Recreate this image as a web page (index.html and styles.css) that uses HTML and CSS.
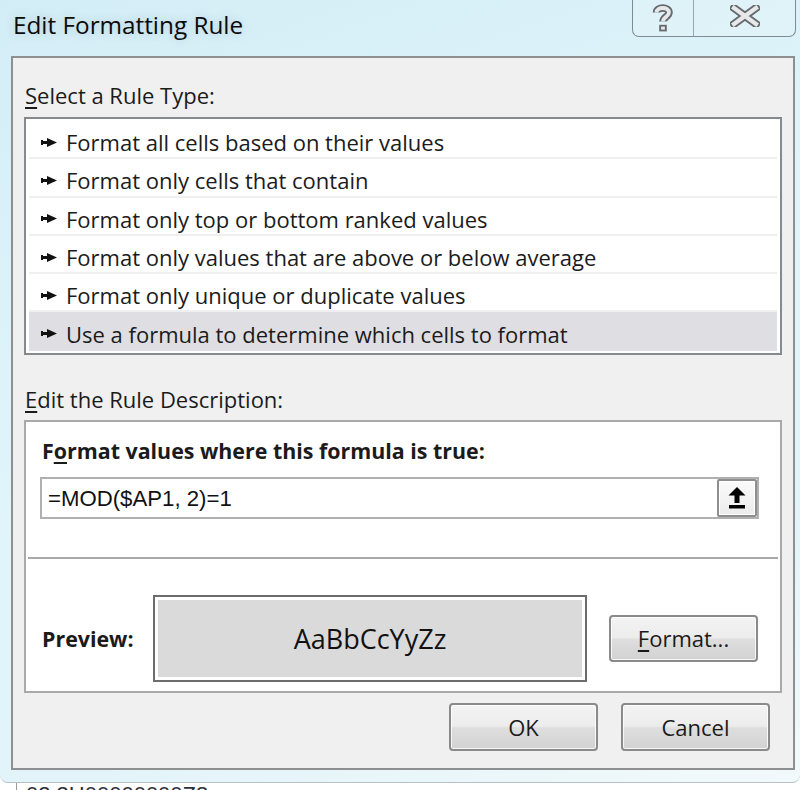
FILE: index.html
```html
<!DOCTYPE html>
<html>
<head>
<meta charset="utf-8">
<link rel="stylesheet" href="styles.css">
</head>
<body>
<div class="window">
  <div class="titlebar">
    <div class="title">Edit Formatting Rule</div>
    <div class="caption">
      <div class="cbtn help">
        <svg width="22" height="28" viewBox="0 0 22 28">
          <path d="M4.5 8.5 C4.5 2.5, 17 2.5, 17 8.5 C17 12.5, 11 13, 11 17.5" fill="none" stroke="#666a6e" stroke-width="7.5" stroke-linejoin="round"/>
          <rect x="7.2" y="20.8" width="7.6" height="6.6" fill="#666a6e"/>
          <path d="M4.5 8.5 C4.5 2.5, 17 2.5, 17 8.5 C17 12.5, 11 13, 11 17.5" fill="none" stroke="#e6e8ea" stroke-width="3.8" stroke-linejoin="round"/>
          <rect x="9.1" y="22.6" width="3.8" height="3" fill="#e6e8ea"/>
        </svg>
      </div>
      <div class="cbtn close">
        <svg width="30" height="22" viewBox="0 0 30 22">
          <path d="M4 3 L26 19 M26 3 L4 19" stroke="#666a6e" stroke-width="8" stroke-linecap="square"/>
          <path d="M4 3 L26 19 M26 3 L4 19" stroke="#e6e8ea" stroke-width="4.2" stroke-linecap="square"/>
        </svg>
      </div>
    </div>
  </div>
  <div class="panel">
    <div class="label first"><u>S</u>elect a Rule Type:</div>
    <div class="listbox">
      <div class="row"><svg class="bullet" width="16" height="9" viewBox="0 0 16 9"><rect x="0" y="3" width="8" height="3" fill="#111"/><rect x="0" y="2" width="2" height="5" fill="#111"/><polygon points="6,0 16,4.5 6,9" fill="#111"/></svg><span>Format all cells based on their values</span></div>
      <div class="row"><svg class="bullet" width="16" height="9" viewBox="0 0 16 9"><rect x="0" y="3" width="8" height="3" fill="#111"/><rect x="0" y="2" width="2" height="5" fill="#111"/><polygon points="6,0 16,4.5 6,9" fill="#111"/></svg><span>Format only cells that contain</span></div>
      <div class="row"><svg class="bullet" width="16" height="9" viewBox="0 0 16 9"><rect x="0" y="3" width="8" height="3" fill="#111"/><rect x="0" y="2" width="2" height="5" fill="#111"/><polygon points="6,0 16,4.5 6,9" fill="#111"/></svg><span>Format only top or bottom ranked values</span></div>
      <div class="row"><svg class="bullet" width="16" height="9" viewBox="0 0 16 9"><rect x="0" y="3" width="8" height="3" fill="#111"/><rect x="0" y="2" width="2" height="5" fill="#111"/><polygon points="6,0 16,4.5 6,9" fill="#111"/></svg><span>Format only values that are above or below average</span></div>
      <div class="row"><svg class="bullet" width="16" height="9" viewBox="0 0 16 9"><rect x="0" y="3" width="8" height="3" fill="#111"/><rect x="0" y="2" width="2" height="5" fill="#111"/><polygon points="6,0 16,4.5 6,9" fill="#111"/></svg><span>Format only unique or duplicate values</span></div>
      <div class="row selected"><svg class="bullet" width="16" height="9" viewBox="0 0 16 9"><rect x="0" y="3" width="8" height="3" fill="#111"/><rect x="0" y="2" width="2" height="5" fill="#111"/><polygon points="6,0 16,4.5 6,9" fill="#111"/></svg><span>Use a formula to determine which cells to format</span></div>
    </div>
    <div class="label second"><u>E</u>dit the Rule Description:</div>
    <div class="desc">
      <div class="heading">F<u>o</u>rmat values where this formula is true:</div>
      <div class="input">
        <span class="val">=MOD($AP1, 2)=1</span>
        <div class="collapse">
          <svg width="18" height="24" viewBox="0 0 18 24">
            <polygon points="0.5,9.5 9,1 17.5,9.5" fill="#000"/>
            <rect x="6.5" y="8" width="5" height="9" fill="#000"/>
            <rect x="1" y="19" width="16" height="3.5" fill="#000"/>
          </svg>
        </div>
      </div>
      <div class="sep"></div>
      <div class="preview-row">
        <div class="plabel">Preview:</div>
        <div class="pbox"><div class="pfill">AaBbCcYyZz</div></div>
        <div class="btn fmt"><span><u>F</u>ormat...</span></div>
      </div>
    </div>
    <div class="actions">
      <div class="btn">OK</div>
      <div class="btn">Cancel</div>
    </div>
  </div>
</div>
<div class="below"><div class="cell">02 3H00000000Z8</div></div>
</body>
</html>
```
FILE: styles.css
```css
html, body {
  margin: 0;
  padding: 0;
}
body {
  width: 800px;
  height: 790px;
  overflow: hidden;
  background: #ffffff;
  font-family: "Open Sans", "Noto Sans", sans-serif;
  color: #1b1b1b;
}
u {
  text-decoration: underline;
  text-decoration-thickness: 1.5px;
  text-underline-offset: 3px;
}
.window {
  height: 783px;
  box-sizing: border-box;
  background: linear-gradient(160deg, #d3edf6 0%, #dff4fa 40%, #e2f4f9 75%, #f2f9fb 100%);
  border-bottom: 1px solid #b7c2c8;
  border-radius: 0 0 8px 8px;
}
.titlebar {
  height: 56px;
  box-sizing: border-box;
  display: flex;
  justify-content: space-between;
  align-items: flex-start;
  padding-left: 13px;
}
.title {
  margin-top: 9px;
  font-size: 24.3px;
  line-height: 32px;
  color: #0a0a0a;
  text-shadow: 0 0 10px rgba(70, 100, 120, 0.25);
}
.caption {
  display: flex;
  width: 164px;
  height: 37px;
  margin-right: 4px;
  box-sizing: border-box;
  border: 1px solid #7f8c96;
  border-top: none;
  border-radius: 0 0 7px 7px;
  background: rgba(255, 255, 255, 0.12);
}
.cbtn {
  display: flex;
  align-items: center;
  justify-content: center;
}
.cbtn.help {
  width: 60px;
  border-right: 1px solid #98a6b0;
  padding-bottom: 1px;
}
.cbtn.close {
  flex: 1;
  padding-bottom: 5px;
}
.panel {
  margin-left: 11px;
  width: 784px;
  height: 714px;
  box-sizing: border-box;
  border: 2px solid #8d8f91;
  background: #f0f0f0;
  padding: 0 11px;
}
.label {
  font-size: 22px;
  line-height: 28px;
  height: 28px;
  padding-left: 1px;
}
.label.first {
  margin-top: 23px;
}
.listbox {
  margin-top: 8px;
  border: 2px solid #86898d;
  background: #ffffff;
  padding: 2px 3px;
}
.row {
  height: 38.3px;
  box-sizing: border-box;
  padding: 6px 0 0 12px;
  border-bottom: 2px solid #efefef;
  display: flex;
  align-items: center;
  font-size: 22px;
  white-space: nowrap;
}
.row.selected {
  background: #dfdfe3;
  border-bottom-color: #dfdfe3;
}
.bullet {
  flex: none;
  margin-right: 9px;
}
.label.second {
  margin-top: 30px;
}
.desc {
  margin-top: 7px;
  height: 273px;
  box-sizing: border-box;
  border: 2px solid #a9a9a9;
  background: #ffffff;
}
.heading {
  margin-top: 15px;
  padding-left: 16px;
  font-size: 21.4px;
  font-weight: 700;
  line-height: 28px;
  height: 28px;
  white-space: nowrap;
}
.input {
  margin: 12px 21px 0 14px;
  height: 42px;
  box-sizing: border-box;
  border: 2px solid #b0b0b0;
  display: flex;
  align-items: center;
  justify-content: space-between;
}
.val {
  padding: 2px 0 0 6px;
  font-family: "Liberation Sans", Arial, sans-serif;
  font-size: 22.2px;
  color: #111;
}
.collapse {
  width: 40px;
  height: 38px;
  box-sizing: border-box;
  border: 2px solid #8e8e8e;
  border-radius: 2px;
  box-shadow: inset 0 0 0 1px #ffffff;
  background: linear-gradient(#fafafa, #ececec);
  display: flex;
  align-items: center;
  justify-content: center;
}
.sep {
  margin: 38px 2px 0 2px;
  height: 2px;
  background: #a9a9a9;
}
.preview-row {
  margin-top: 36px;
  height: 87px;
  display: flex;
  align-items: center;
  padding-left: 16px;
}
.plabel {
  width: 111px;
  font-size: 21.4px;
  font-weight: 700;
}
.pbox {
  width: 434px;
  height: 87px;
  box-sizing: border-box;
  border: 2px solid #6c6c6c;
  padding: 3px;
  background: #ffffff;
}
.pfill {
  height: 100%;
  background: #dadada;
  display: flex;
  align-items: center;
  justify-content: center;
  font-size: 27px;
  color: #111;
}
.btn {
  width: 149px;
  height: 48px;
  box-sizing: border-box;
  border: 2px solid #8a8a8a;
  border-radius: 4px;
  background: linear-gradient(#f3f3f3 0%, #ececec 48%, #dedede 52%, #d2d2d2 100%);
  box-shadow: inset 0 0 0 1px rgba(255, 255, 255, 0.8);
  display: flex;
  align-items: center;
  justify-content: center;
  font-size: 22px;
  color: #1b1b1b;
}
.btn.fmt {
  margin-left: 22px;
  height: 47px;
}
.actions {
  margin-top: 10px;
  display: flex;
  justify-content: flex-end;
  gap: 23px;
  padding-right: 12px;
}
.below {
  height: 7px;
  overflow: hidden;
  padding-left: 16px;
}
.cell {
  border-left: 1px solid #9a9a9a;
  padding-left: 9px;
  height: 7px;
  font-family: "Liberation Sans", Arial, sans-serif;
  font-size: 22px;
  line-height: 24px;
  color: #2a2f3a;
}
```
